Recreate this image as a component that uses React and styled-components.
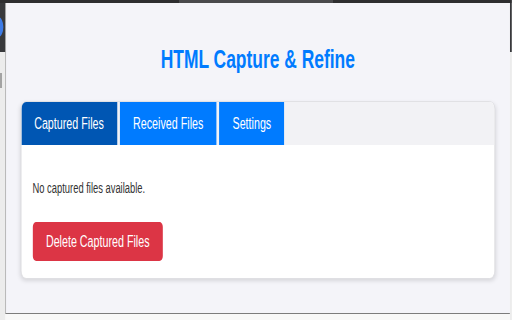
import React from 'react';
import styled, { createGlobalStyle } from 'styled-components';

const GlobalStyle = createGlobalStyle`
  html, body {
    margin: 0;
    padding: 0;
    width: 512px;
    height: 320px;
    overflow: hidden;
    background: #f6f6f6;
    font-family: "Liberation Sans", Arial, sans-serif;
  }
`;

// the shot is squeezed sideways, so the page is laid out wide and scaled
const Stage = styled.div`
  width: 764px;
  height: 320px;
  transform: scaleX(0.67);
  transform-origin: 0 0;
  display: flex;
  flex-direction: column;
`;

const TopBar = styled.div`
  height: 3px;
  background: linear-gradient(to right, #2e2e30 0 35%, #4a4a4c 35% 65%, #2e2e30 65%);
`;

const Row = styled.div`
  flex: 1;
  display: flex;
`;

const Edge = styled.div`
  position: relative;
  width: ${props => props.w}px;
  display: flex;
  flex-direction: column;
  overflow: hidden;
`;

const EdgeDark = styled.div`
  height: 49px;
  background: #38393c;
`;

const EdgeLight = styled.div`
  flex: 1;
  background: #ececec;
`;

const BrowserIcon = styled.div`
  position: absolute;
  left: -10px;
  top: 14px;
  width: 15px;
  height: 20px;
  border-radius: 50%;
  background: #3d7be6;
`;

const Scrap = styled.div`
  position: absolute;
  left: 0;
  top: 70px;
  width: 3px;
  height: 15px;
  background: #a3a3a3;
`;

const Middle = styled.div`
  flex: 1;
  display: flex;
  flex-direction: column;
`;

const Popup = styled.div`
  height: 310px;
  background: #f4f4f9;
  border-left: 1px solid #8c8c8c;
  border-bottom: 1px solid #7c7c7c;
  padding: 0 22px 0 21.5px;
  display: flex;
  flex-direction: column;
`;

const Under = styled.div`
  flex: 1;
  background: #f8f8f8;
`;

const Title = styled.h1`
  margin: 41px 0 27px;
  font-size: 26px;
  line-height: 30px;
  font-weight: bold;
  text-align: center;
  color: #007bff;
`;

const Card = styled.div`
  background: #ffffff;
  border: 1px solid #dcdce0;
  border-radius: 8px;
  overflow: hidden;
  box-shadow: 0 2px 5px rgba(0, 0, 0, 0.12);
`;

const Tabs = styled.div`
  display: flex;
  gap: 4.5px;
  background: #f2f2f5;
`;

const Tab = styled.button`
  border: none;
  margin: 0;
  padding: 12px 19.5px;
  font-family: inherit;
  font-size: 16px;
  line-height: 19px;
  color: #ffffff;
  background: ${props => props.active ? '#0056b3' : '#007bff'};
  cursor: pointer;
`;

const Content = styled.div`
  padding: 20px 17px 17px;
`;

const Empty = styled.p`
  margin: 13px 0 24px;
  font-size: 14px;
  line-height: 20px;
  color: #333333;
`;

const DangerButton = styled.button`
  display: block;
  border: none;
  border-radius: 5px;
  padding: 10px 20px;
  font-family: inherit;
  font-size: 16px;
  line-height: 19px;
  color: #ffffff;
  background: #dc3545;
  cursor: pointer;
`;

const tabs = ['Captured Files', 'Received Files', 'Settings'];

function App() {
  return (
    <>
      <GlobalStyle />
      <Stage>
        <TopBar />
        <Row>
          <Edge w={8}>
            <EdgeDark />
            <EdgeLight />
            <BrowserIcon />
            <Scrap />
          </Edge>
          <Middle>
            <Popup>
              <Title>HTML Capture &amp; Refine</Title>
              <Card>
                <Tabs>
                  {tabs.map((t, i) => (
                    <Tab key={t} active={i === 0}>{t}</Tab>
                  ))}
                </Tabs>
                <Content>
                  <Empty>No captured files available.</Empty>
                  <DangerButton type='button'>Delete Captured Files</DangerButton>
                </Content>
              </Card>
            </Popup>
            <Under />
          </Middle>
          <Edge w={3}>
            <EdgeDark />
            <EdgeLight />
          </Edge>
        </Row>
      </Stage>
    </>
  );
}

export default App;
